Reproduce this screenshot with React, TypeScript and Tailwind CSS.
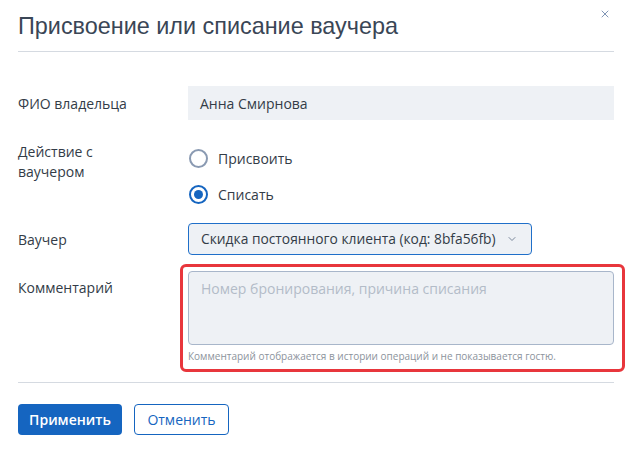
import { ChevronDown, X } from 'lucide-react';

const body = { fontFamily: '"Open Sans", sans-serif' };

const App = () => {
  return (
    <div className="w-[632px] h-[453px] bg-white px-[18px] text-[#333c47]" style={body}>
      {/* Header */}
      <div className="relative flex h-[52px] items-center border-b border-[#d5dae1] pt-[2px]">
        <h1
          className="text-[23.4px] leading-none text-[#3a4656]"
          style={{ fontFamily: '"Liberation Sans", Arial, sans-serif' }}
        >
          Присвоение или списание ваучера
        </h1>
        <button className="absolute right-[3px] top-[8px] text-[#7f95b5]">
          <X className="h-[12px] w-[12px]" strokeWidth={2} />
        </button>
      </div>

      {/* Form */}
      <div className="flex flex-col pt-[34px] text-[14px]">
        <div className="flex items-center">
          <div className="w-[170px] shrink-0">ФИО владельца</div>
          <div className="flex h-[34px] flex-1 items-center bg-[#eef1f5] px-[12px]">Анна Смирнова</div>
        </div>

        <div className="mt-[22px] flex">
          <div className="w-[168px] shrink-0 leading-[20px]">
            Действие с<br />
            ваучером
          </div>
          <div className="flex flex-col gap-[15px] pt-[6px]">
            <label className="flex items-center gap-[10px] pl-[3px]">
              <span className="h-[19px] w-[19px] rounded-full border-2 border-[#8a9ab2]" />
              <span>Присвоить</span>
            </label>
            <label className="flex items-center gap-[10px] pl-[3px]">
              <span className="flex h-[19px] w-[19px] items-center justify-center rounded-full border-2 border-[#1565c0]">
                <span className="h-[9px] w-[9px] rounded-full bg-[#1565c0]" />
              </span>
              <span>Списать</span>
            </label>
          </div>
        </div>

        <div className="mt-[18px] flex items-center">
          <div className="w-[170px] shrink-0">Ваучер</div>
          <button className="flex h-[32px] items-center gap-[10px] rounded-[4px] border border-[#1f6fc9] bg-[#eef1f5] pl-[12px] pr-[13px] text-[13.8px] text-[#333c47]">
            Скидка постоянного клиента (код: 8bfa56fb)
            <ChevronDown className="h-[12px] w-[12px] text-[#7a879a]" strokeWidth={2} />
          </button>
        </div>

        <div className="mt-[9px] flex">
          <div className="w-[170px] shrink-0 pt-[13px]">Комментарий</div>
          <div className="relative flex-1 pt-[7px]">
            <div className="pointer-events-none absolute -left-[8px] -right-[11px] top-0 -bottom-[9px] rounded-[6px] border-[3px] border-[#e8363c]" />
            <textarea
              className="block h-[74px] w-full resize-none rounded-[4px] border border-[#a8b6ca] bg-[#eef1f5] px-[12px] py-[6px] text-[14px] placeholder:text-[#b3bcc8] outline-none"
              placeholder="Номер бронирования, причина списания"
              style={body}
            />
            <div className="mt-[4px] text-[10px] leading-[14px] text-[#8c939c]">
              Комментарий отображается в истории операций и не показывается гостю.
            </div>
          </div>
        </div>
      </div>

      {/* Footer */}
      <div className="mt-[19px] border-t border-[#d5dae1] pt-[21px]">
        <div className="flex gap-[12px]">
          <button className="h-[31px] w-[104px] rounded-[4px] bg-[#1565c0] text-[14px] font-semibold text-white">
            Применить
          </button>
          <button className="h-[31px] w-[95px] rounded-[4px] border border-[#1565c0] bg-white text-[14px] text-[#1565c0]">
            Отменить
          </button>
        </div>
      </div>
    </div>
  );
};

export default App;
